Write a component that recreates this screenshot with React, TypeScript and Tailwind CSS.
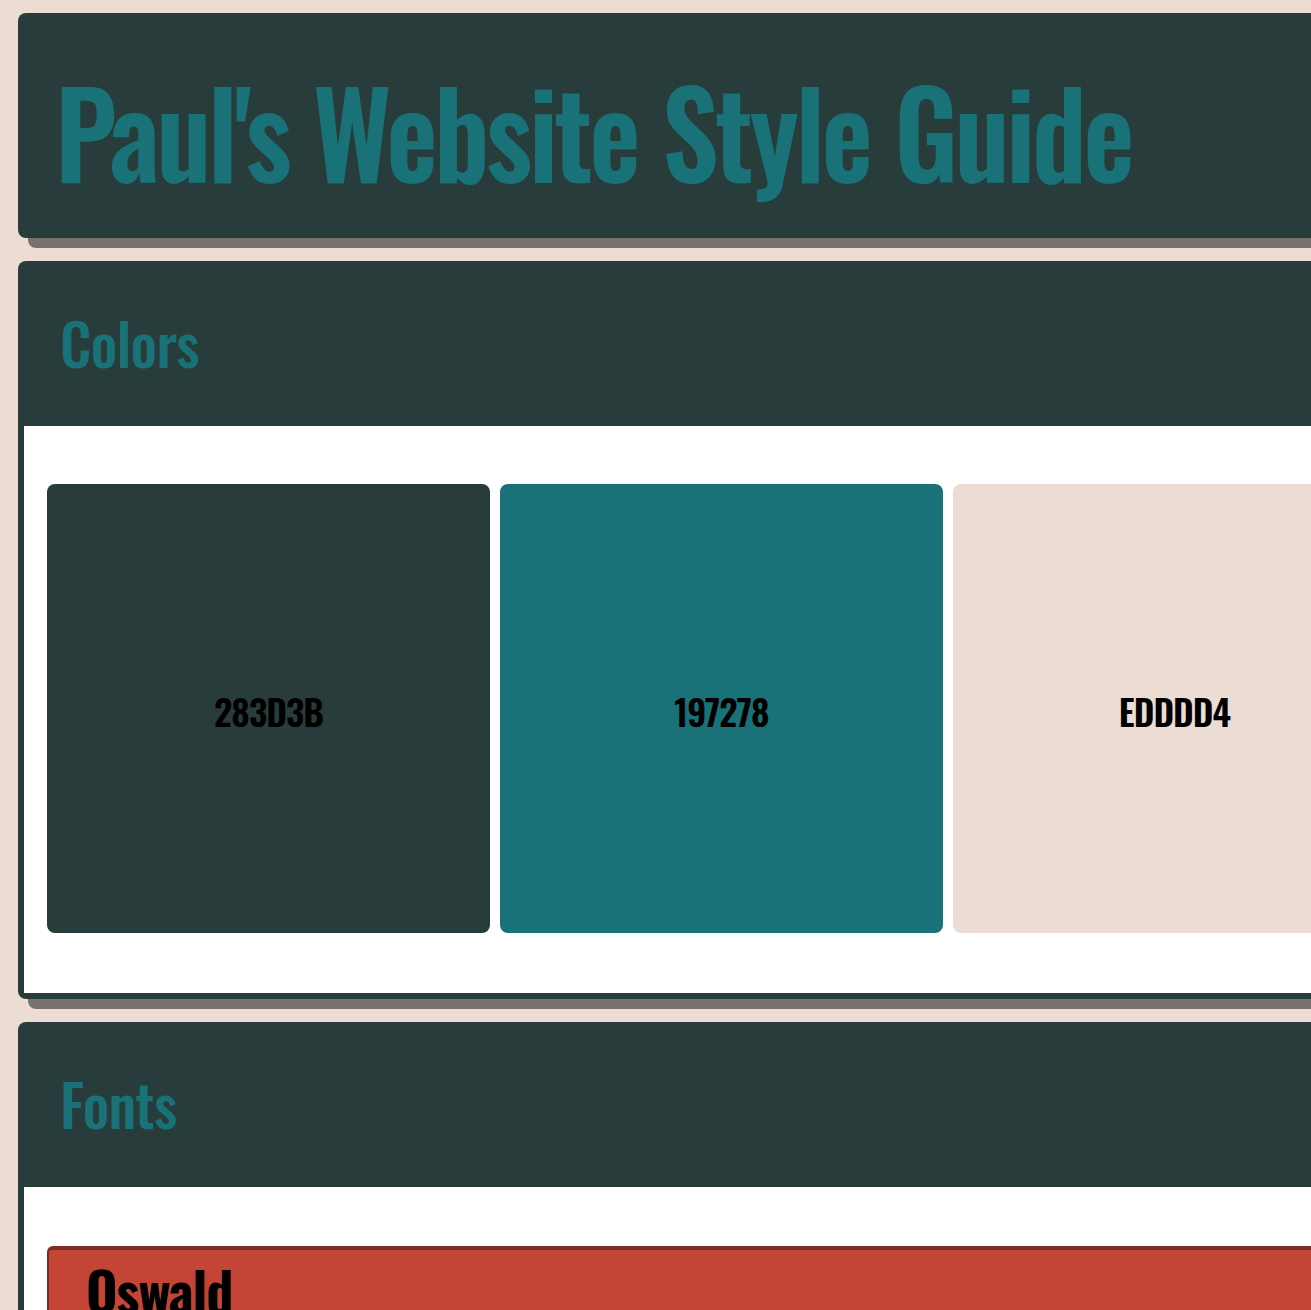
const condensed = "font-['Oswald','DejaVu_Sans_Condensed','Liberation_Sans_Narrow',sans-serif]";

const swatches = [
  { hex: "283D3B", bg: "bg-[#283d3b]" },
  { hex: "197278", bg: "bg-[#197278]" },
  { hex: "EDDDD4", bg: "bg-[#eddcd4]" },
];

function Section({ title, children }: { title: string; children: React.ReactNode }) {
  return (
    <section className="w-[1407px] rounded-lg bg-[#283d3b] shadow-[10px_10px_0_0_#78716c]">
      <div className="h-[165px] flex items-center pl-[42px] pb-[4px]">
        <h2 className={`${condensed} text-[58px] leading-none font-medium text-[#197278] tracking-[-0.01em]`}>{title}</h2>
      </div>
      <div className="mx-[6px] mb-[6px] bg-white">{children}</div>
    </section>
  );
}

export default function App() {
  return (
    <div className="w-full min-h-screen overflow-hidden bg-[#eddcd4]">
      <div className="flex flex-col gap-[23px] pl-[18px] pt-[13px] pb-10">
        <header className="w-[1407px] h-[225px] rounded-lg bg-[#283d3b] shadow-[10px_10px_0_0_#78716c] flex items-center pl-[37px] pt-[7px]">
          <h1 className={`${condensed} text-[119px] leading-none font-semibold text-[#197278] tracking-[-0.03em] origin-left scale-x-[0.94] whitespace-nowrap`}>
            Paul's Website Style Guide
          </h1>
        </header>

        <Section title="Colors">
          <div className="flex gap-[10px] pl-[23px] pt-[58px] pb-[60px]">
            {swatches.map((s) => (
              <div
                key={s.hex}
                className={`${s.bg} w-[443px] h-[449px] rounded-lg flex items-center justify-center`}
              >
                <span className={`${condensed} text-[36px] font-semibold text-black tracking-tight pt-[4px]`}>{s.hex}</span>
              </div>
            ))}
          </div>
        </Section>

        <Section title="Fonts">
          <div className="pl-[23px] pt-[59px] pb-[40px] pr-[23px]">
            <div className="rounded-md bg-[#c44536] border-2 border-t-4 border-[#772e25] px-[37px] py-[13px]">
              <div className={`${condensed} text-[54px] leading-none font-bold text-black tracking-[-0.02em]`}>Oswald</div>
              <div className="h-[200px]" />
            </div>
          </div>
        </Section>
      </div>
    </div>
  );
}
